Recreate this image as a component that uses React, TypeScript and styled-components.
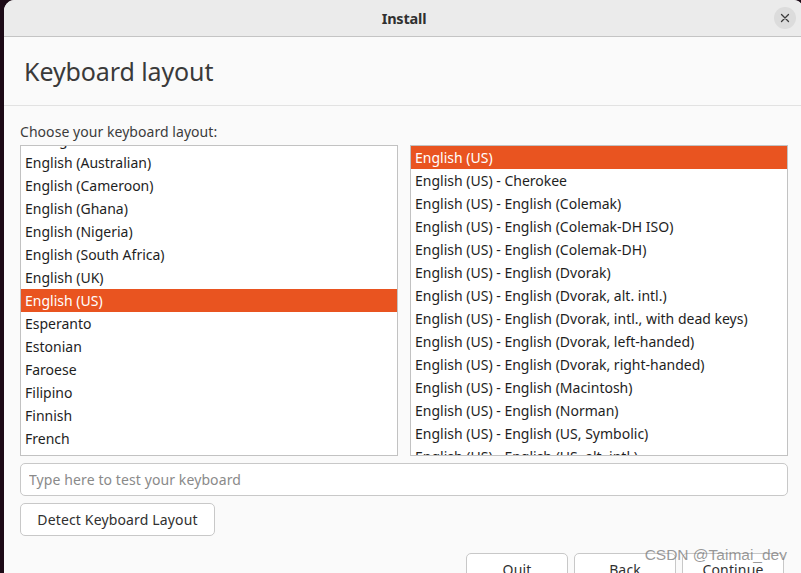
import styled, { createGlobalStyle } from "styled-components";

const GlobalStyle = createGlobalStyle`
  html, body {
    margin: 0;
    padding: 0;
    height: 100%;
    overflow: hidden;
    background: #1c0a16;
  }
  #root {
    height: 100%;
  }
  * {
    box-sizing: border-box;
  }
`;

const FONT = `"Noto Sans", "Open Sans", sans-serif`;

const leftLayouts = [
  "Dzongkha",
  "English (Australian)",
  "English (Cameroon)",
  "English (Ghana)",
  "English (Nigeria)",
  "English (South Africa)",
  "English (UK)",
  "English (US)",
  "Esperanto",
  "Estonian",
  "Faroese",
  "Filipino",
  "Finnish",
  "French",
  "French (Canada)",
];

const rightVariants = [
  "English (US)",
  "English (US) - Cherokee",
  "English (US) - English (Colemak)",
  "English (US) - English (Colemak-DH ISO)",
  "English (US) - English (Colemak-DH)",
  "English (US) - English (Dvorak)",
  "English (US) - English (Dvorak, alt. intl.)",
  "English (US) - English (Dvorak, intl., with dead keys)",
  "English (US) - English (Dvorak, left-handed)",
  "English (US) - English (Dvorak, right-handed)",
  "English (US) - English (Macintosh)",
  "English (US) - English (Norman)",
  "English (US) - English (US, Symbolic)",
  "English (US) - English (US, alt. intl.)",
];

function App() {
  return (
    <>
      <GlobalStyle />
      <Window>
        <TitleBar>
          <span />
          <WindowTitle>Install</WindowTitle>
          <CloseButton aria-label="Close">
            <svg width="10" height="10" viewBox="0 0 10 10">
              <path
                d="M1.5 1.5 L8.5 8.5 M8.5 1.5 L1.5 8.5"
                stroke="#3a3a3a"
                strokeWidth="1.3"
                strokeLinecap="round"
              />
            </svg>
          </CloseButton>
        </TitleBar>

        <PageHeader>
          <PageTitle>Keyboard layout</PageTitle>
        </PageHeader>

        <Content>
          <FieldLabel>Choose your keyboard layout:</FieldLabel>
          <ListsRow>
            <ListBox>
              <ListInner $offset={-18}>
                {leftLayouts.map((name) => (
                  <Row key={name} $selected={name === "English (US)"}>
                    {name}
                  </Row>
                ))}
              </ListInner>
            </ListBox>
            <ListBox>
              <ListInner $offset={0}>
                {rightVariants.map((name, i) => (
                  <Row key={name} $selected={i === 0}>
                    {name}
                  </Row>
                ))}
              </ListInner>
            </ListBox>
          </ListsRow>

          <TestInput placeholder="Type here to test your keyboard" />

          <div>
            <PushButton $width={195}>Detect Keyboard Layout</PushButton>
          </div>

          <NavRow>
            <PushButton $width={102}>Quit</PushButton>
            <PushButton $width={102}>Back</PushButton>
            <PushButton $width={102}>Continue</PushButton>
          </NavRow>
        </Content>

        <Watermark>CSDN @Taimai_dev</Watermark>
      </Window>
    </>
  );
}

const Window = styled.div`
  position: relative;
  margin-left: 4px;
  width: 800px;
  height: 100%;
  background: #fafafa;
  border-radius: 11px 11px 0 0;
  overflow: hidden;
  font-family: ${FONT};
  color: #2b2b2b;
  display: flex;
  flex-direction: column;
`;

const TitleBar = styled.div`
  height: 37px;
  flex-shrink: 0;
  background: #ebebeb;
  border-bottom: 1px solid #c4c4c4;
  display: grid;
  grid-template-columns: 1fr auto 1fr;
  align-items: center;
`;

const WindowTitle = styled.div`
  font-size: 14.5px;
  font-weight: 700;
  color: #303030;
  letter-spacing: -0.2px;
`;

const CloseButton = styled.div`
  justify-self: end;
  margin-right: 8px;
  width: 22px;
  height: 22px;
  border-radius: 50%;
  background: #dcdcdc;
  display: flex;
  align-items: center;
  justify-content: center;
`;

const PageHeader = styled.div`
  height: 69px;
  flex-shrink: 0;
  padding-left: 20px;
  display: flex;
  align-items: center;
  border-bottom: 1px solid #e2e2e2;
`;

const PageTitle = styled.h1`
  margin: 0;
  font-size: 25px;
  font-weight: 400;
  color: #3a3a3a;
  letter-spacing: -0.1px;
`;

const Content = styled.div`
  padding: 16px 16px 0;
  display: flex;
  flex-direction: column;
  gap: 7px;
`;

const FieldLabel = styled.div`
  font-size: 14px;
  line-height: 19px;
  color: #3c3c3c;
  margin-bottom: -3px;
  letter-spacing: 0.05px;
`;

const ListsRow = styled.div`
  display: grid;
  grid-template-columns: 1fr 1fr;
  gap: 12px;
`;

const ListBox = styled.div`
  height: 311px;
  background: #ffffff;
  border: 1px solid #c2c2c2;
  overflow: hidden;
`;

const ListInner = styled.div<{ $offset: number }>`
  margin-top: ${(p) => p.$offset}px;
  display: flex;
  flex-direction: column;
`;

const Row = styled.div<{ $selected: boolean }>`
  height: 23px;
  flex-shrink: 0;
  padding-left: 4px;
  display: flex;
  align-items: center;
  font-size: 14px;
  letter-spacing: 0;
  white-space: nowrap;
  background: ${(p) => (p.$selected ? "#e95420" : "transparent")};
  color: ${(p) => (p.$selected ? "#ffffff" : "#1e1e1e")};
`;

const TestInput = styled.input`
  height: 33px;
  border: 1px solid #c8c8c8;
  border-radius: 5px;
  background: #ffffff;
  padding: 0 8px;
  font-family: ${FONT};
  font-size: 14px;
  letter-spacing: 0.1px;
  color: #2b2b2b;
  outline: none;

  &::placeholder {
    color: #8a8a8a;
  }
`;

const PushButton = styled.button<{ $width: number }>`
  width: ${(p) => p.$width}px;
  height: 33px;
  border: 1px solid #c8c8c8;
  border-radius: 5px;
  background: #ffffff;
  font-family: ${FONT};
  font-size: 14px;
  letter-spacing: 0.15px;
  color: #303030;
  padding: 0;
`;

const NavRow = styled.div`
  margin-top: 10px;
  padding-right: 4px;
  display: flex;
  justify-content: flex-end;
  gap: 6px;
`;

const Watermark = styled.div`
  position: absolute;
  right: 17px;
  top: 546px;
  font-family: "Liberation Sans", Arial, sans-serif;
  font-size: 15.5px;
  color: rgba(120, 120, 120, 0.75);
  pointer-events: none;
`;

export default App;
